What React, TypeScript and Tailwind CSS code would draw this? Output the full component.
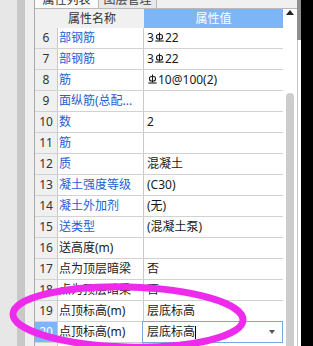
import React from "react";

function Rebar() {
  return (
    <svg width="9" height="12" viewBox="0 0 9 12" className="inline-block mx-[1px]" style={{ verticalAlign: "-1px" }}>
      <g fill="none" stroke="#1a1a1a" strokeWidth="1.1">
        <line x1="4.5" y1="0.5" x2="4.5" y2="8.5" />
        <rect x="1.5" y="2.5" width="6" height="4.5" rx="2" />
        <line x1="0.3" y1="9" x2="8.7" y2="9" />
      </g>
    </svg>
  );
}

type Row = { n: number; name: string; blue: boolean; val: React.ReactNode };

const rows: Row[] = [
  { n: 6, name: "部钢筋", blue: true, val: <>3<Rebar />22</> },
  { n: 7, name: "部钢筋", blue: true, val: <>3<Rebar />22</> },
  { n: 8, name: "筋", blue: true, val: <><Rebar />10@100(2)</> },
  { n: 9, name: "面纵筋(总配...", blue: true, val: "" },
  { n: 10, name: "数", blue: true, val: "2" },
  { n: 11, name: "筋", blue: true, val: "" },
  { n: 12, name: "质", blue: true, val: "混凝土" },
  { n: 13, name: "凝土强度等级", blue: true, val: "(C30)" },
  { n: 14, name: "凝土外加剂", blue: true, val: "(无)" },
  { n: 15, name: "送类型", blue: true, val: "(混凝土泵)" },
  { n: 16, name: "送高度(m)", blue: false, val: "" },
  { n: 17, name: "点为顶层暗梁", blue: false, val: "否" },
  { n: 18, name: "点为顶层暗梁", blue: false, val: "否" },
  { n: 19, name: "点顶标高(m)", blue: false, val: "层底标高" },
];

export default function App() {
  return (
    <div className="relative w-[313px] h-[346px] overflow-hidden flex bg-white text-[12px] font-['Noto_Sans','Noto_Sans_CJK_SC',sans-serif] text-[#1a1a1a]">
      {/* left strips */}
      <div className="w-[17px] shrink-0 bg-[#e7e7e7]" />
      <div className="w-[8px] shrink-0 bg-[#c8c8c8]" />
      <div className="w-[9px] shrink-0 bg-[#efefef]" />
      <div className="w-[1px] shrink-0 bg-[#a9a9a9]" />

      {/* panel */}
      <div className="w-[262px] shrink-0 flex flex-col overflow-hidden">
        {/* tabs */}
        <div className="h-[9px] shrink-0 flex bg-[#f0f0f0] border-b border-[#b9b9b9] overflow-hidden">
          <div className="w-[64px] bg-[#fbfbfb] border-r border-[#b9b9b9] overflow-hidden text-center">
            <div className="-mt-[8px] leading-[16px] text-[#333]">属性列表</div>
          </div>
          <div className="w-[58px] bg-[#e9e9e9] border-r border-[#b9b9b9] overflow-hidden text-center">
            <div className="-mt-[8px] leading-[16px] text-[#444]">图层管理</div>
          </div>
        </div>

        <div className="flex flex-1 min-h-0">
          {/* table */}
          <div className="w-[248px] flex flex-col overflow-hidden">
            <div className="h-[19px] shrink-0 flex">
              <div className="w-[109px] bg-[#f0f0f0] flex items-center pl-[33px] text-[#333]">属性名称</div>
              <div className="flex-1 bg-[#7db6f6] flex items-center justify-center text-white">属性值</div>
            </div>
            {rows.map((r) => (
              <div key={r.n} className="h-[21px] shrink-0 grid grid-cols-[23px_86px_139px] border-b border-[#d2d2d2]">
                <div className="bg-[#f0f0f0] border-r border-[#c9c9c9] flex items-center justify-center text-[#333]">{r.n}</div>
                <div className={`border-r border-[#c9c9c9] flex items-center pl-[1px] whitespace-nowrap overflow-hidden ${r.blue ? "text-[#2360d4]" : "text-[#1a1a1a]"}`}>{r.name}</div>
                <div className="flex items-center pl-[3px] whitespace-nowrap">{r.val}</div>
              </div>
            ))}
            <div className="h-[21px] shrink-0 grid grid-cols-[23px_86px_139px] border-b border-[#d2d2d2]">
              <div className="bg-[#7db6f6] border-r border-[#c9c9c9] flex items-center justify-center text-white">20</div>
              <div className="border-r border-[#c9c9c9] flex items-center pl-[1px] whitespace-nowrap">点顶标高(m)</div>
              <div className="relative">
                <div className="absolute -top-[1px] -left-[2px] right-0 -bottom-[1px] border border-[#7ba8d8] bg-white flex items-center pl-[4px]">
                  <span>层底标高</span>
                  <span className="w-[1px] h-[13px] bg-black" />
                  <svg width="6" height="4" viewBox="0 0 6 4" className="absolute right-[7px] top-[8px]">
                    <path d="M0 0 H6 L3 4 Z" fill="#555" />
                  </svg>
                </div>
              </div>
            </div>
            <div className="h-[21px] shrink-0 grid grid-cols-[23px_86px_139px]">
              <div className="bg-[#f0f0f0] border-r border-[#c9c9c9]" />
              <div className="border-r border-[#c9c9c9]" />
              <div />
            </div>
          </div>

          {/* scrollbar */}
          <div className="w-[14px] shrink-0 flex flex-col items-center pt-[1px]">
            <svg width="8" height="5" viewBox="0 0 8 5" className="shrink-0">
              <path d="M0 5 L4 0 L8 5 Z" fill="#222" />
            </svg>
            <div className="mt-[78px] w-[8px] flex-1 rounded-t-[4px] bg-[#cdcdcd]" />
          </div>
        </div>
      </div>

      {/* right edge */}
      <div className="w-[4px] shrink-0 flex flex-col">
        <div className="h-[40px] bg-[#8f8f8f]" />
        <div className="flex-1 flex">
          <div className="w-[1px] bg-[#c8c8c8]" />
          <div className="flex-1 bg-white" />
        </div>
      </div>
      <div className="flex-1 bg-black" />

      {/* hand-drawn annotation */}
      <svg className="absolute inset-0 pointer-events-none" width="313" height="346" viewBox="0 0 313 346">
        <ellipse cx="128" cy="317" rx="115" ry="30" transform="rotate(1.5 128 317)" fill="none" stroke="#ee2bec" strokeWidth="7" />
      </svg>
    </div>
  );
}
